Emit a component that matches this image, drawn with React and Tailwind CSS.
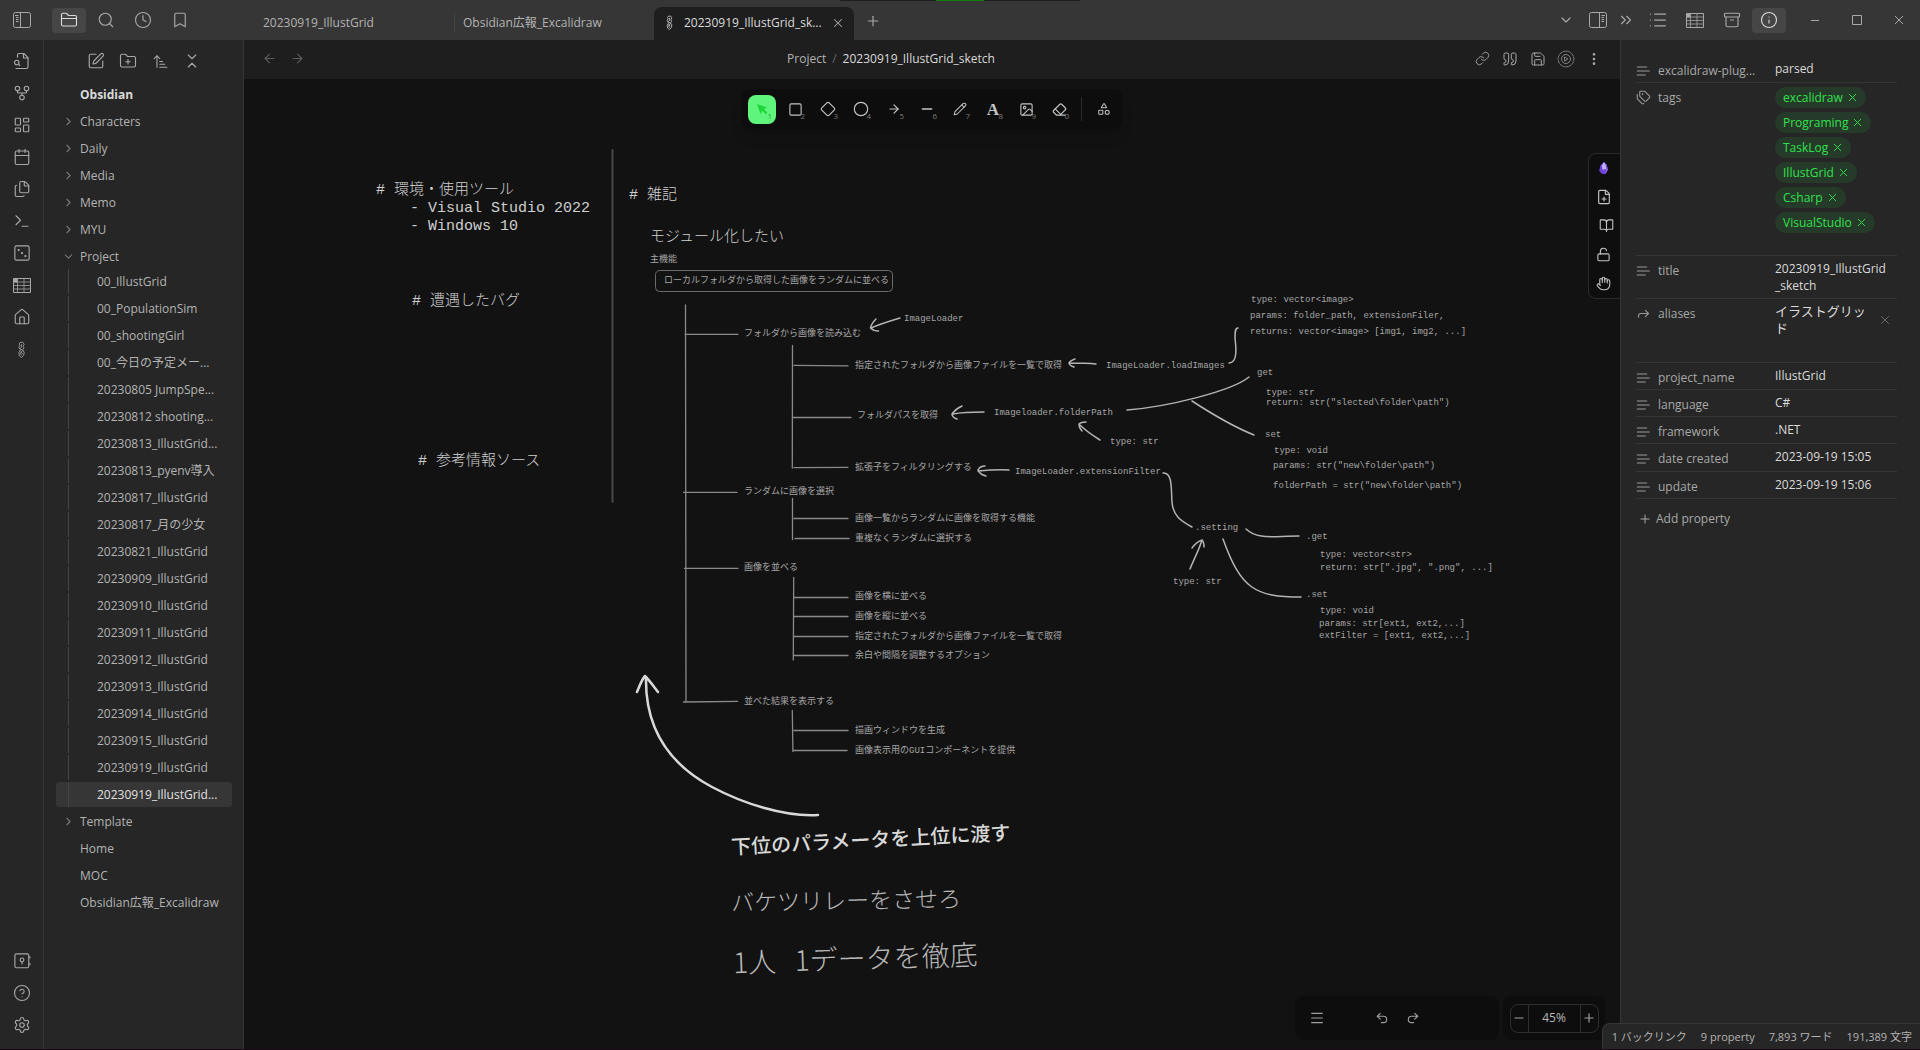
import React from "react";
import {
  FolderClosed, Search, Clock, Bookmark, GitFork, LayoutDashboard, Calendar, Files, Terminal, House,
  Settings, SquarePen, FolderPlus, ArrowUpNarrowWide, ChevronsDownUp, ChevronRight, ChevronDown, X, Plus,
  Minus, Square, Diamond, Circle, ArrowLeft, ArrowRight, Pencil, Image, Eraser, Shapes, Link, Quote, Save,
  EllipsisVertical, ChevronsRight, List, Archive, Info, FilePlus, BookOpen, LockOpen, Hand, Tags, Forward,
  Undo2, Redo2, Menu, CircleQuestionMark,
} from "lucide-react";

const svgBase = { viewBox: "0 0 24 24", fill: "none", stroke: "currentColor", strokeLinecap: "round", strokeLinejoin: "round" };

function Svg({ size = 18, sw = 1.75, children }) {
  return (
    <svg {...svgBase} width={size} height={size} strokeWidth={sw} aria-hidden="true">
      {children}
    </svg>
  );
}

function SidebarIcon({ flip = false }) {
  return (
    <svg viewBox="0 0 18 16" width="18" height="16" fill="none" stroke="currentColor" strokeWidth="1" className={flip ? "-scale-x-100" : ""} aria-hidden="true">
      <rect x="0.5" y="0.5" width="17" height="15" rx="2" />
      <path d="M7.5 .5v15M2 3.5h3.5M3 5.5h2.5M3 7.5h2.5M3 9.5h2.5" />
    </svg>
  );
}

function TableIcon() {
  return (
    <svg viewBox="0 0 18 15" width="18" height="15" fill="none" stroke="currentColor" strokeWidth="1" aria-hidden="true">
      <path d="M.5.5h17v14H.5z" />
      <path d="M.5 4h17M.5 7.5h17M.5 11h17M4.5.5v14M11 .5v14" strokeOpacity="0.75" />
      <path d="M1 1h3v3H1z" fill="currentColor" />
    </svg>
  );
}

function FileSearchIcon() {
  return (
    <Svg sw={1.5}>
      <path d="M14 2v6h6" />
      <path d="M4 22h14a2 2 0 0 0 2-2V7.5L14.500 2H8a2 2 0 0 0-2 2v3" />
      <circle cx="5" cy="14" r="3" />
      <path d="m9 18-1.500-1.500" />
    </Svg>
  );
}

function DiceIcon() {
  return (
    <Svg sw={1.5}>
      <rect x="2.500" y="2.500" width="19" height="19" rx="2" />
      <g strokeWidth="3"><path d="M7.500 8h.01M12 12h.01M16.500 16h.01" /></g>
    </Svg>
  );
}

function PenIcon({ size = 16 }) {
  return (
    <svg viewBox="0 0 16 16" width={size} height={size} fill="none" stroke="currentColor" strokeWidth="0.8" strokeLinejoin="round" aria-hidden="true">
      <path d="M6.500 1.500 9 1l1.500 2-1 2 .8 1.500-1.300 2 1.500 2-.5 3L8 15.500l-2-1.500-.5-3L7 8.500 5.500 6 6.500 4 5.800 2.800z" />
      <path d="M8 3v2.500L6.800 7 9 9l-2 2.500 1 2M7 10l2 2" />
    </svg>
  );
}

function VaultIcon() {
  return (
    <Svg sw={1.5}>
      <rect x="2.500" y="2.500" width="18.500" height="18.500" rx="2" />
      <circle cx="12" cy="10.500" r="2.500" />
      <path d="M12 13v3M22.500 6v2M22.500 15v2" />
    </Svg>
  );
}

function TextIcon() {
  return <Svg size={16}><path d="M16 6H2M20 12H2M14 18H2" /></Svg>;
}

function GearPlayIcon() {
  return (
    <Svg sw={1.25}>
      <circle cx="12" cy="12" r="10.500" strokeDasharray="3 1.500" />
      <circle cx="12" cy="12" r="6" />
      <path d="m10.500 9.500 4 2.500-4 2.500z" />
    </Svg>
  );
}

function GemIcon() {
  return (
    <svg viewBox="0 0 12 16" width="11" height="14" aria-hidden="true">
      <path d="M6.500 1 2.500 5 1 11l3 3.500 4 .5 3-5L9.500 4z" fill="#6d42d8" />
      <path d="M6.500 1 4 5.500 5 10l4-1-.5-5z" fill="#c3aef8" />
      <path d="M9.500 4 9 9l-1 6 3-5z" fill="#8c68ec" />
    </svg>
  );
}

function IconButton({ label, active = false, className = "", children }) {
  return (
    <button type="button" aria-label={label} className={`flex shrink-0 items-center justify-center rounded ${active ? "bg-[#464646] text-[#dadada]" : "text-[#a8a8a8]"} ${className}`}>
      {children}
    </button>
  );
}

const ic = { size: 18, strokeWidth: 1.5 };

function Tab({ active = false, children }) {
  return (
    <div role="tab" aria-selected={active} className={`flex h-[33px] w-[200px] min-w-0 items-center pb-0.5 ${active ? "rounded-t-lg bg-[#1e1e1e] text-[#dadada]" : "text-[#b3b3b3]"}`}>
      {children}
    </div>
  );
}

function TitleBar() {
  return (
    <header className="relative flex h-10 shrink-0 items-stretch bg-[#363636]">
      <div className="absolute left-1/2 top-0 flex h-px w-60 -translate-x-1/2 justify-center bg-[#1e1e1e]">
        <span className="w-12 bg-[#107c10]" />
      </div>
      <div className="flex w-[254px] shrink-0 items-center gap-[3px] pl-[9px]">
        <IconButton label="Toggle left sidebar" className="mr-[14px] h-[25px] w-[26px]"><SidebarIcon /></IconButton>
        <IconButton label="Files" active className="h-[25px] w-[34px]"><FolderClosed {...ic} /></IconButton>
        <IconButton label="Search" className="h-[25px] w-[34px]"><Search {...ic} /></IconButton>
        <IconButton label="Recent" className="h-[25px] w-[34px]"><Clock {...ic} /></IconButton>
        <IconButton label="Bookmarks" className="h-[25px] w-[34px]"><Bookmark {...ic} /></IconButton>
      </div>
      <div role="tablist" className="flex items-end">
        <Tab><span className="px-[9px]">20230919_IllustGrid</span></Tab>
        <Tab><span className="flex h-5 items-center border-l border-[#444] px-2">Obsidian広報_Excalidraw</span></Tab>
        <Tab active>
          <span className="flex w-[30px] justify-center"><PenIcon size={15} /></span>
          <span className="w-36">20230919_IllustGrid_sk...</span>
          <IconButton label="Close tab" className="size-5"><X size={14} strokeWidth={1.75} /></IconButton>
        </Tab>
      </div>
      <IconButton label="New tab" className="ml-[7px] w-6 pt-0.5"><Plus size={16} strokeWidth={1.75} /></IconButton>
      <div className="ml-auto flex items-center">
        <IconButton label="Tab list" className="w-8"><ChevronDown size={16} strokeWidth={1.75} /></IconButton>
        <IconButton label="Toggle right sidebar" className="w-8"><SidebarIcon flip /></IconButton>
        <IconButton label="More" className="w-6"><ChevronsRight size={18} strokeWidth={1.5} /></IconButton>
        <div className="ml-[3px] flex items-center gap-[3px]">
          <IconButton label="Outline" className="h-[25px] w-[34px]"><List size={20} strokeWidth={1.5} /></IconButton>
          <IconButton label="Table" className="h-[25px] w-[34px]"><TableIcon /></IconButton>
          <IconButton label="Archive" className="h-[25px] w-[34px]"><Archive {...ic} /></IconButton>
          <IconButton label="Properties" active className="h-[25px] w-[34px]"><Info {...ic} /></IconButton>
        </div>
        <div className="ml-2 flex">
          <IconButton label="Minimize" className="h-10 w-[42px]"><svg width="10" height="10" stroke="currentColor" aria-hidden="true"><path d="M1 5.500h8" /></svg></IconButton>
          <IconButton label="Maximize" className="h-10 w-[42px]"><svg width="10" height="10" fill="none" stroke="currentColor" aria-hidden="true"><path d="M.5.5h9v9h-9z" /></svg></IconButton>
          <IconButton label="Close" className="h-10 w-[42px]"><svg width="10" height="10" stroke="currentColor" aria-hidden="true"><path d="m1 1 8 8M9 1 1 9" /></svg></IconButton>
        </div>
      </div>
    </header>
  );
}

function Ribbon() {
  const top = [
    ["Quick switcher", <FileSearchIcon />],
    ["Graph view", <GitFork {...ic} />],
    ["Canvas", <LayoutDashboard {...ic} />],
    ["Daily note", <Calendar {...ic} />],
    ["Templates", <Files {...ic} />],
    ["Command palette", <Terminal {...ic} />],
    ["Random note", <DiceIcon />],
    ["Sheet", <TableIcon />],
    ["Home", <House {...ic} />],
    ["New drawing", <PenIcon size={17} />],
  ];
  const bottom = [
    ["Open vault", <VaultIcon />],
    ["Help", <CircleQuestionMark {...ic} />],
    ["Settings", <Settings {...ic} />],
  ];
  const render = ([label, icon]) => <IconButton key={label} label={label} className="size-6">{icon}</IconButton>;
  return (
    <nav aria-label="Ribbon" className="flex w-11 shrink-0 flex-col items-center justify-between border-r border-[#363636] bg-[#262626] pb-3 pt-[9px]">
      <div className="flex flex-col gap-2">{top.map(render)}</div>
      <div className="flex flex-col gap-2">{bottom.map(render)}</div>
    </nav>
  );
}

const projectFiles = [
  "00_IllustGrid", "00_PopulationSim", "00_shootingGirl", "00_今日の予定メー...", "20230805 JumpSpe...", "20230812 shooting...",
  "20230813_IllustGrid...", "20230813_pyenv導入", "20230817_IllustGrid", "20230817_月の少女", "20230821_IllustGrid",
  "20230909_IllustGrid", "20230910_IllustGrid", "20230911_IllustGrid", "20230912_IllustGrid", "20230913_IllustGrid",
  "20230914_IllustGrid", "20230915_IllustGrid", "20230919_IllustGrid", "20230919_IllustGrid...",
];

function TreeRow({ name, icon = null }) {
  return (
    <button type="button" className="flex h-[25px] w-full items-center rounded text-left">
      <span className="flex w-6 justify-center text-[#777]">
        {icon === "closed" && <ChevronRight size={13} strokeWidth={2} />}
        {icon === "open" && <ChevronDown size={13} strokeWidth={2} />}
      </span>
      {name}
    </button>
  );
}

function FileTree() {
  return (
    <aside className="flex w-[200px] shrink-0 flex-col border-r border-[#363636] bg-[#262626] pl-3 pr-[11px] text-[#b3b3b3]">
      <div className="flex h-[42px] items-center justify-center gap-2">
        <IconButton label="New note" className="size-6"><SquarePen {...ic} /></IconButton>
        <IconButton label="New folder" className="size-6"><FolderPlus {...ic} /></IconButton>
        <IconButton label="Sort order" className="size-6"><ArrowUpNarrowWide size={17} strokeWidth={1.5} /></IconButton>
        <IconButton label="Collapse all" className="size-6"><ChevronsDownUp {...ic} /></IconButton>
      </div>
      <h2 className="mb-0.5 flex h-[25px] items-center pl-6 font-bold text-[#dadada]">Obsidian</h2>
      <ul className="flex flex-col gap-0.5">
        {["Characters", "Daily", "Media", "Memo", "MYU"].map((n) => <li key={n}><TreeRow name={n} icon="closed" /></li>)}
        <li>
          <TreeRow name="Project" icon="open" />
          <ul className="flex flex-col gap-0.5">
            {projectFiles.map((n, i) => {
              const selected = i === projectFiles.length - 1;
              return (
                <li key={n} className={selected ? "rounded bg-[#363636] text-[#e0e0e0]" : ""}>
                  <button type="button" className="ml-3 flex h-[25px] w-[150px] items-center whitespace-nowrap border-l border-[#444] pl-7 text-left">{n}</button>
                </li>
              );
            })}
          </ul>
        </li>
        <li><TreeRow name="Template" icon="closed" /></li>
        {["Home", "MOC", "Obsidian広報_Excalidraw"].map((n) => <li key={n}><TreeRow name={n} /></li>)}
      </ul>
    </aside>
  );
}

/* Canvas notes: [x, centre y, text]. The origin of the canvas sits at (244, 79). */
const ORIGIN = { x: 244, y: 78 };
const headings = [
  [376, 189, "# 環境・使用ツール"],
  [410, 207, "- Visual Studio 2022"],
  [410, 225, "- Windows 10"],
  [412, 300, "# 遭遇したバグ"],
  [418, 460, "# 参考情報ソース"],
  [629, 194, "# 雑記"],
  [650, 236, "モジュール化したい"],
];
const notes = [
  [650, 259, "主機能"],
  [664, 280, "ローカルフォルダから取得した画像をランダムに並べる"],
  [744, 333, "フォルダから画像を読み込む"],
  [744, 491, "ランダムに画像を選択"],
  [744, 567, "画像を並べる"],
  [744, 701, "並べた結果を表示する"],
  [855, 365, "指定されたフォルダから画像ファイルを一覧で取得"],
  [857, 415, "フォルダパスを取得"],
  [855, 467, "拡張子をフィルタリングする"],
  [855, 518, "画像一覧からランダムに画像を取得する機能"],
  [855, 538, "重複なくランダムに選択する"],
  [855, 596, "画像を横に並べる"],
  [855, 616, "画像を縦に並べる"],
  [855, 636, "指定されたフォルダから画像ファイルを一覧で取得"],
  [855, 655, "余白や間隔を調整するオプション"],
  [855, 730, "描画ウィンドウを生成"],
  [855, 750, "画像表示用のGUIコンポーネントを提供"],
  [904, 318, "ImageLoader"],
  [1106, 365, "ImageLoader.loadImages"],
  [994, 412, "Imageloader.folderPath"],
  [1110, 441, "type: str"],
  [1015, 471, "ImageLoader.extensionFilter"],
  [1251, 299, "type: vector<image>"],
  [1250, 315, "params: folder_path, extensionFiler,"],
  [1250, 331, "returns: vector<image> [img1, img2, ...]"],
  [1257, 372, "get"],
  [1266, 392, "type: str"],
  [1266, 402, "return: str(\"slected\\folder\\path\")"],
  [1265, 434, "set"],
  [1274, 450, "type: void"],
  [1273, 465, "params: str(\"new\\folder\\path\")"],
  [1273, 485, "folderPath = str(\"new\\folder\\path\")"],
  [1195, 527, ".setting"],
  [1306, 536, ".get"],
  [1320, 554, "type: vector<str>"],
  [1320, 567, "return: str[\".jpg\", \".png\", ...]"],
  [1306, 594, ".set"],
  [1320, 610, "type: void"],
  [1319, 623, "params: str[ext1, ext2,...]"],
  [1319, 635, "extFilter = [ext1, ext2,...]"],
  [1173, 581, "type: str"],
];

function Note({ x, y, className, children }) {
  return (
    <p className={`absolute whitespace-pre leading-none ${className}`} style={{ left: x - ORIGIN.x, top: y - ORIGIN.y }}>
      {children}
    </p>
  );
}

function CanvasLines() {
  return (
    <svg className="absolute left-0 top-0" width="1375" height="970" viewBox="244 79 1375 970" fill="none" strokeLinecap="round" strokeLinejoin="round" aria-hidden="true">
      <path d="M612.5 150v352" stroke="#484848" strokeWidth="2" />
      <rect x="655.5" y="270.5" width="237" height="21" rx="4" stroke="#6a6a6a" />
      <g stroke="#8a8a8a" strokeWidth="1.300">
        <path d="M685.500 305 686 702M685 334.300h53M683.500 492.300h53.500M684.500 568.300h53.500M683.500 702l54-.6" />
        <path d="M792.500 345.500 792.300 468M794 365.300l54 .6M793 417.500h58M794 467.700l54-.4" />
        <path d="M792.500 498.500v41M794 518.500h54M795 538.500h54" />
        <path d="M793.700 577.500 793.300 660M794 597.500h54M794 616.500h54M794 636.500h54M794 655.500h54" />
        <path d="M792.300 710.500l.6 41M794 730.500h54M793 750.500h54" />
      </g>
      <g stroke="#b4b4b4" strokeWidth="1.500">
        <path d="M900 318c-10 3-20 6-29 10M876 319c-3 3-5 6-5.500 9 2 2 5 3 8 3" />
        <path d="M1096 364c-9-1-18-1-27-1M1075 359c-3 1-5 2-6 4 0 2 2 3 5 4" />
        <path d="M984 412c-10 0-21 0-31 2M962 406c-4 2-8 5-10 8 0 3 2 4 5 5" />
        <path d="M1100 440c-8-5-14-9-20-15M1086 422c-3 0-6 1-7 2 0 3 1 5 3 7" />
        <path d="M1009 470c-10-1-21 0-31 1M985 466c-3 0-6 2-7 4 1 3 4 5 8 6" />
        <path d="M1229 363c9 0 7-16 6-25 0-6 0-10 3-10" />
        <path d="M1127 410c40-3 105-19 122-33M1192 401c20 13 42 26 62 34" />
        <path d="M1163 473c10-1 8 18 9 29 1 14 9 19 20 25" />
        <path d="M1246 529c12 11 26 7 53 7" />
        <path d="M1223 539c18 50 32 58 78 58" />
        <path d="M1190 569c4-10 9-19 12-29M1192 548c3-4 7-7 10-8 2 2 2 4 2 7" />
      </g>
      <path d="M818 815C784 817 742 803 712 787C665 762 645 725 646 677M637 692C640 685 642 679 645 676C650 681 654 687 658 692" stroke="#d8d8d8" strokeWidth="2.500" />
    </svg>
  );
}

const tools = [
  ["Rectangle", "2", <Square size={15} strokeWidth={1.75} />],
  ["Diamond", "3", <Diamond size={16} strokeWidth={1.75} />],
  ["Ellipse", "4", <Circle size={16} strokeWidth={1.75} />],
  ["Arrow", "5", <ArrowRight size={14} strokeWidth={2} />],
  ["Line", "6", <Minus size={16} strokeWidth={2} />],
  ["Draw", "7", <Pencil size={14} strokeWidth={1.75} />],
  ["Text", "8", <span className="font-['Liberation_Serif',serif] text-[17px] font-bold leading-none">A</span>],
  ["Insert image", "9", <Image size={15} strokeWidth={1.75} />],
  ["Eraser", "0", <Eraser size={15} strokeWidth={1.75} />],
];

function ToolBar() {
  return (
    <div role="toolbar" aria-label="Drawing tools" className="absolute left-1/2 top-2.5 flex h-10 -translate-x-1/2 items-center gap-[5px] rounded-lg bg-[#0d0d0d] pl-1.5 pr-1 text-[#c4c4c4] shadow-lg">
      <button type="button" aria-label="Selection" className="relative flex h-[29px] w-7 items-center justify-center rounded-lg bg-[#5ff57c]">
        <svg viewBox="0 0 12 12" width="12" height="12" fill="#1cd63c" aria-hidden="true"><path d="M1 1l3.500 10 1.800-3.300 3.500 3.500 1.500-1.500-3.500-3.500L11 4.500z" /></svg>
        <span className="absolute bottom-1 right-1 text-[8px] leading-none text-[#2a9b3f]">1</span>
      </button>
      {tools.map(([label, key, icon]) => (
        <button key={key} type="button" aria-label={label} className="relative flex h-[29px] w-7 items-center justify-center">
          {icon}
          <span className="absolute bottom-1 right-1 text-[8px] leading-none text-[#7a7a7a]">{key}</span>
        </button>
      ))}
      <span className="mx-[3px] h-6 w-px bg-[#2a2a2a]" />
      <button type="button" aria-label="Library" className="flex h-[29px] w-7 items-center justify-center"><Shapes size={14} strokeWidth={1.75} /></button>
    </div>
  );
}

function Canvas() {
  return (
    <div className="relative min-h-0 flex-1 overflow-hidden bg-[#121212]">
      <CanvasLines />
      {headings.map(([x, y, t]) => <Note key={t} x={x} y={y} className="-translate-y-1/2 font-['Liberation_Mono','Noto_Sans_CJK_JP',monospace] text-[15px] font-light text-[#cfcfcf]">{t}</Note>)}
      {notes.map(([x, y, t]) => <Note key={`${x}-${y}`} x={x} y={y} className="-translate-y-1/2 font-['Liberation_Mono','Noto_Sans_CJK_JP',monospace] text-[9px] text-[#a6a6a6]">{t}</Note>)}
      <Note x={731} y={828} className="-rotate-3 font-['Noto_Sans_CJK_JP',sans-serif] text-[20px] font-medium text-[#d8d8d8]">下位のパラメータを上位に渡す</Note>
      <Note x={731} y={887} className="-rotate-1 font-['Noto_Sans_CJK_JP',sans-serif] text-[23px] font-light text-[#b8b8b8]">バケツリレーをさせろ</Note>
      <Note x={733} y={942} className="-rotate-2 font-['Noto_Sans_CJK_JP',sans-serif] text-[28px] font-light text-[#b8b8b8]">1人   1データを徹底</Note>

      <ToolBar />

      <div role="toolbar" aria-label="Drawing panel" className="absolute right-0 top-[74px] flex h-[146px] w-8 flex-col items-center justify-around rounded-l-lg border border-r-0 border-[#2a2a2a] bg-[#0e0e0e] pr-0.5 text-[#c4c4c4]">
        <button type="button" aria-label="Plugin panel"><GemIcon /></button>
        <button type="button" aria-label="New file"><FilePlus size={16} strokeWidth={1.75} /></button>
        <button type="button" aria-label="Library" className="pl-1.5"><BookOpen size={15} strokeWidth={1.75} /></button>
        <button type="button" aria-label="Unlock"><LockOpen size={15} strokeWidth={1.75} /></button>
        <button type="button" aria-label="Pan"><Hand size={15} strokeWidth={1.75} /></button>
      </div>

      <div className="absolute bottom-[9px] right-[15px] flex h-11 items-stretch gap-1 text-[#a0a0a0]">
        <div className="flex w-[204px] items-center rounded-lg bg-[#0d0d0d] pl-3.5">
          <button type="button" aria-label="Menu" className="mr-[50px]"><Menu size={16} strokeWidth={1.75} /></button>
          <button type="button" aria-label="Undo" className="mr-[17px]"><Undo2 size={14} strokeWidth={2} /></button>
          <button type="button" aria-label="Redo"><Redo2 size={14} strokeWidth={2} /></button>
        </div>
        <div className="flex w-[102px] items-center justify-center rounded-lg bg-[#0d0d0d]">
          <div className="flex h-[29px] items-stretch rounded-lg border border-[#2e2e2e]">
            <button type="button" aria-label="Zoom out" className="flex w-[17px] items-center justify-center"><Minus size={14} strokeWidth={2} /></button>
            <button type="button" className="w-[53px] border-x border-[#2e2e2e] text-[#b8b8b8]">45%</button>
            <button type="button" aria-label="Zoom in" className="flex w-[17px] items-center justify-center"><Plus size={14} strokeWidth={2} /></button>
          </div>
        </div>
      </div>
    </div>
  );
}

function View() {
  return (
    <main className="flex min-w-0 flex-1 flex-col bg-[#1e1e1e]">
      <div className="grid h-[39px] shrink-0 grid-cols-[1fr_auto_1fr] items-center pb-0.5">
        <div className="flex gap-1 pl-[13px]">
          <button type="button" aria-label="Back" className="flex size-6 items-center justify-center text-[#5c5c5c]"><ArrowLeft size={15} strokeWidth={1.75} /></button>
          <button type="button" aria-label="Forward" className="flex size-6 items-center justify-center text-[#5c5c5c]"><ArrowRight size={15} strokeWidth={1.75} /></button>
        </div>
        <div className="flex gap-1.5 pr-[82px]">
          <span className="text-[#b3b3b3]">Project</span>
          <span className="text-[#666]">/</span>
          <h1 className="text-[#dadada]">20230919_IllustGrid_sketch</h1>
        </div>
        <div className="flex justify-end gap-1 pr-3.5">
          <IconButton label="Copy link" className="size-6"><Link size={15} strokeWidth={1.5} /></IconButton>
          <IconButton label="Quote" className="size-6"><Quote size={16} strokeWidth={1.5} /></IconButton>
          <IconButton label="Save" className="size-6"><Save size={16} strokeWidth={1.5} /></IconButton>
          <IconButton label="Run script" className="size-6 opacity-75"><GearPlayIcon /></IconButton>
          <IconButton label="More options" className="size-6"><EllipsisVertical size={16} strokeWidth={2} /></IconButton>
        </div>
      </div>
      <Canvas />
    </main>
  );
}

function Property({ icon = <TextIcon />, label, className, children }) {
  return (
    <div className={`flex items-start border-b border-[#363636] ${className}`}>
      <dt className="flex w-[139px] shrink-0 items-center pt-1.5 leading-[17px] text-[#a8a8a8]">
        <span className="flex w-[22px] shrink-0 text-[#999]">{icon}</span>
        {label}
      </dt>
      <dd className="min-w-0 flex-1 pt-1 leading-[17px] text-[#dadada]">{children}</dd>
    </div>
  );
}

function PropertiesPanel() {
  return (
    <aside className="w-[300px] shrink-0 border-l border-[#363636] bg-[#262626] pl-[15px] pr-[23px] pt-4">
      <dl>
        <Property label="excalidraw-plug..." className="h-[27px]">parsed</Property>
        <Property label="tags" className="h-[173px]" icon={<Tags size={15} strokeWidth={1.75} />}>
          <ul className="flex flex-col items-start gap-1">
            {["excalidraw", "Programing", "TaskLog", "IllustGrid", "Csharp", "VisualStudio"].map((t) => (
              <li key={t} className="flex h-[21px] items-center gap-[3px] rounded-full bg-[#263a2a] pl-2 pr-[7px] text-[#30e14c]">
                {t}
                <button type="button" aria-label={`Remove ${t}`}><X size={13} strokeWidth={1.75} /></button>
              </li>
            ))}
          </ul>
        </Property>
        <Property label="title" className="h-[43px]">20230919_IllustGrid<wbr />_sketch</Property>
        <Property label="aliases" className="h-[64px]" icon={<Forward size={15} strokeWidth={1.75} />}>
          <div className="flex items-center justify-between pr-[5px]">
            <span className="w-[96px] break-all text-[13px] leading-[17px]">イラストグリッド</span>
            <button type="button" aria-label="Remove alias" className="text-[#777]"><X size={14} strokeWidth={1.5} /></button>
          </div>
        </Property>
        <Property label="project_name" className="h-[27px]">IllustGrid</Property>
        <Property label="language" className="h-[27px]">C#</Property>
        <Property label="framework" className="h-[27px]">.NET</Property>
        <Property label="date created" className="h-7">2023-09-19 15:05</Property>
        <Property label="update" className="h-[27px]">2023-09-19 15:06</Property>
      </dl>
      <button type="button" className="mt-3 flex items-center gap-1 pl-0.5 text-[#a8a8a8]"><Plus size={14} strokeWidth={1.75} />Add property</button>
    </aside>
  );
}

export default function App() {
  return (
    <div className="relative flex h-screen flex-col overflow-hidden border-b border-[#170a12] bg-[#1e1e1e] font-['Open_Sans','Noto_Sans_CJK_JP',sans-serif] text-[12px] leading-4">
      <TitleBar />
      <div className="flex min-h-0 flex-1">
        <Ribbon />
        <FileTree />
        <View />
        <PropertiesPanel />
      </div>
      <footer className="absolute bottom-0 right-0 flex h-[26px] items-center gap-3.5 rounded-tl-lg border-l border-t border-[#363636] bg-[#262626] pl-[9px] pr-2 text-[11px] text-[#b3b3b3]">
        <span>1 バックリンク</span>
        <span>9 property</span>
        <span>7,893 ワード</span>
        <span>191,389 文字</span>
      </footer>
    </div>
  );
}
